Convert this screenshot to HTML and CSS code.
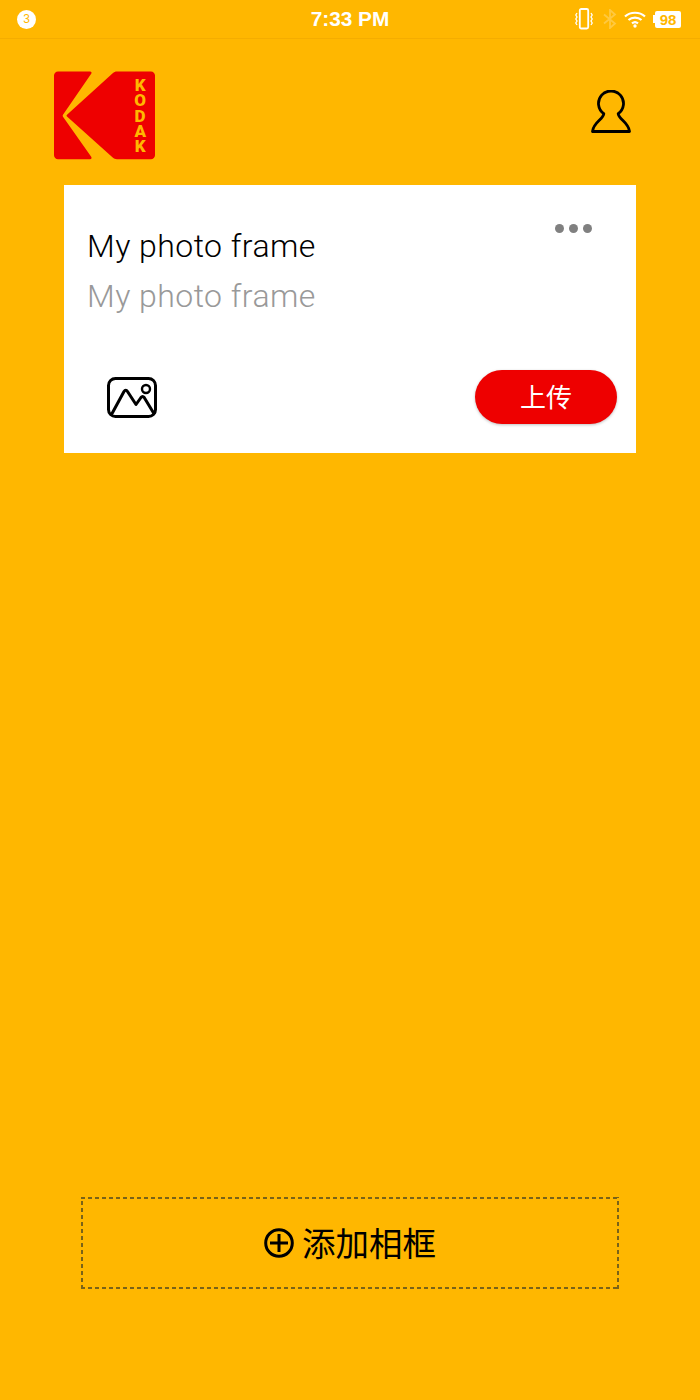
FILE: index.html
```html
<!DOCTYPE html>
<html lang="en">
<head>
    <meta charset="UTF-8">
    <meta name="viewport" content="width=device-width, initial-scale=1.0">
    <title>Kodak frames</title>
    <link rel="stylesheet" href="styles.css">
</head>
<body>
    <div class="page">
        <!-- Status bar -->
        <div class="status">
            <div class="status-left"><span class="notif">3</span></div>
            <div class="clock">7:33 PM</div>
            <div class="status-right">
                <svg class="ic-vibrate" width="18" height="22" viewBox="0 0 18 22" fill="none" stroke="#fff">
                    <rect x="4.800" y="1" width="8.400" height="19.500" rx="1.500" stroke-width="1.800"/>
                    <path d="M2 5L.8 7 2 9 .8 11 2 13 .8 15 2 17M16 5l1.200 2L16 9l1.200 2L16 13l1.200 2L16 17" stroke-width="1.300"/>
                </svg>
                <svg class="ic-bt" width="14" height="20" viewBox="0 0 14 20" fill="none" stroke="#fff" stroke-opacity=".25" stroke-width="1.800">
                    <path d="M1 5.500l11 9-5 4.500V1l5 4.500-11 9"/>
                </svg>
                <svg class="ic-wifi" width="22" height="18" viewBox="0 0 22 18" fill="none" stroke="#fff" stroke-width="2.200">
                    <path d="M1 6.500c5.500-5 14.500-5 20 0M4.500 10c3.500-3.200 9.500-3.200 13 0M8 13.300c1.700-1.400 4.300-1.400 6 0"/>
                    <circle cx="11" cy="16" r="1.700" fill="#fff" stroke="none"/>
                </svg>
                <div class="battery"><span class="battery-cap"></span><span class="battery-body">98</span></div>
            </div>
        </div>

        <div class="header">
            <div class="logo">
                <svg width="101" height="89" viewBox="0 0 101 89">
                    <path fill="#ee0000" d="M4 .5H36c1.500 0 2 1.200 1.200 2.300L9 43.800c-.5.700-.5 1.300 0 2L37.200 85.800c.8 1.200.2 2.500-1.200 2.500H4c-2.200 0-4-1.800-4-4V4.500C0 2.300 1.800.5 4 .5z"/>
                    <path fill="#ee0000" d="M63 .5H97c2.200 0 4 1.800 4 4V84.300c0 2.200-1.800 4-4 4H63c-1.800 0-3-.5-4.300-1.700L13 45.500c-.6-.5-.6-1.200 0-1.700L58.700 2.200C60 1 61.200.5 63 .5z"/>
                </svg>
                <span class="logo-text">KODAK</span>
            </div>
            <svg class="profile" width="40" height="44" viewBox="0 1 40 44" fill="none" stroke="#000" stroke-width="2.800" stroke-linejoin="round">
                <path d="M1.500 42.500H38.500C37.500 33 28.200 31 27.200 24.700A12.500 12.500 0 1 0 12.800 24.700C11.800 31 2.500 33 1.500 42.500z"/>
            </svg>
        </div>

        <div class="card">
            <div class="card-top">
                <div>
                    <div class="name">My photo frame</div>
                    <div class="name sub">My photo frame</div>
                </div>
                <div class="dots"><span></span><span></span><span></span></div>
            </div>
            <div class="card-bottom">
                <svg class="pic" width="50" height="41" viewBox="0 0 50 41" fill="none" stroke="#000" stroke-width="3" stroke-linejoin="round">
                    <rect x="1.500" y="1.500" width="47" height="38" rx="7"/>
                    <path d="M4.500 37.500L17 14.500c1-1.600 2.500-1.600 3.500 0l8.500 13 5-7c1-1.300 2.200-1.300 3.200 0L47.500 37.500"/>
                    <circle cx="39" cy="12" r="4" stroke-width="2.400"/>
                </svg>
                <button class="upload">上传</button>
            </div>
        </div>

        <div class="add-frame">
            <svg class="add-icon" width="30" height="30" viewBox="0 0 30 30" fill="none" stroke="#000" stroke-width="3">
                <circle cx="15" cy="15" r="13.300"/>
                <path d="M15 6v18M6 15h18"/>
            </svg>
            <span>添加相框</span>
        </div>
    </div>
</body>
</html>
```
FILE: styles.css
```css
* {
    box-sizing: border-box;
}

body {
    margin: 0;
    background: #ffb700;
    font-family: "Liberation Sans", "Noto Sans CJK SC", sans-serif;
}

.page {
    width: 700px;
    height: 1400px;
    display: flex;
    flex-direction: column;
    background: #ffb700;
}

/* Status bar */
.status {
    height: 39px;
    padding: 0 19px 0 17px;
    display: grid;
    grid-template-columns: 1fr auto 1fr;
    align-items: center;
    border-bottom: 1px solid #f5ad00;
    color: #fff;
}

.notif {
    display: flex;
    align-items: center;
    justify-content: center;
    width: 19px;
    height: 19px;
    border-radius: 50%;
    background: #fff;
    color: #ffb700;
    font-size: 12px;
}

.clock {
    padding-left: 2px;
    font-size: 20.800px;
    font-weight: 700;
}

.status-right {
    display: flex;
    justify-content: flex-end;
    align-items: center;
    gap: 7px;
}

.ic-vibrate {
    margin-right: 3px;
}

.battery {
    display: flex;
    align-items: center;
}

.battery-cap {
    width: 2px;
    height: 8px;
    background: #fff;
}

.battery-body {
    width: 26px;
    height: 17px;
    border-radius: 2px;
    background: #fff;
    color: #ffb700;
    font-size: 15px;
    font-weight: 700;
    line-height: 17px;
    text-align: center;
}

/* Header */
.header {
    display: flex;
    justify-content: space-between;
    align-items: flex-start;
    padding: 32px 69px 0 54px;
}

.logo {
    position: relative;
    height: 89px;
}

/* letters stacked down the right side of the mark */
.logo-text {
    position: absolute;
    top: 4px;
    left: 77px;
    writing-mode: vertical-rl;
    text-orientation: upright;
    color: #ffb700;
    font-family: Roboto, sans-serif;
    font-size: 17px;
    font-weight: 900;
    line-height: 18px;
    letter-spacing: -4.700px;
}

.profile {
    margin-top: 19px;
}

/* Frame card */
.card {
    width: 572px;
    height: 268px;
    margin: 25px 0 0 64px;
    padding: 40px 19px 29px 23px;
    display: flex;
    flex-direction: column;
    justify-content: space-between;
    background: #fff;
}

.card-top {
    display: flex;
    justify-content: space-between;
    align-items: flex-start;
}

.name {
    height: 50px;
    font-family: Roboto, sans-serif;
    font-size: 32px;
    font-weight: 300;
    letter-spacing: 0.45px;
    line-height: 42px;
    color: #000;
}

.sub {
    color: #999;
}

.dots {
    display: flex;
    gap: 5px;
    margin: -1px 25px 0 0;
}

.dots span {
    width: 9px;
    height: 9px;
    border-radius: 50%;
    background: #808080;
}

.card-bottom {
    display: flex;
    justify-content: space-between;
    align-items: center;
    padding-left: 20px;
}

.upload {
    width: 142px;
    height: 54px;
    padding: 0 0 3px;
    border: 0;
    border-radius: 27px;
    background: #ee0000;
    box-shadow: 0 1px 3px rgba(0, 0, 0, 0.25);
    color: #fff;
    font-family: "Noto Sans CJK SC", sans-serif;
    font-size: 26px;
}

/* Add frame button */
.add-frame {
    width: 538px;
    height: 92px;
    margin: auto 0 111px 81px;
    padding-bottom: 3px;
    display: flex;
    align-items: center;
    justify-content: center;
    gap: 8px;
    background:
        repeating-linear-gradient(90deg, #7a6318 0 4px, transparent 4px 7px) top / 100% 2px no-repeat,
        repeating-linear-gradient(90deg, #7a6318 0 4px, transparent 4px 7px) bottom / 100% 2px no-repeat,
        repeating-linear-gradient(0deg, #7a6318 0 4px, transparent 4px 7px) left / 2px 100% no-repeat,
        repeating-linear-gradient(0deg, #7a6318 0 4px, transparent 4px 7px) right / 2px 100% no-repeat;
    color: #000;
    font-family: "Noto Sans CJK SC", sans-serif;
    font-size: 33.500px;
}

.add-icon {
    margin-top: 3px;
}
```
